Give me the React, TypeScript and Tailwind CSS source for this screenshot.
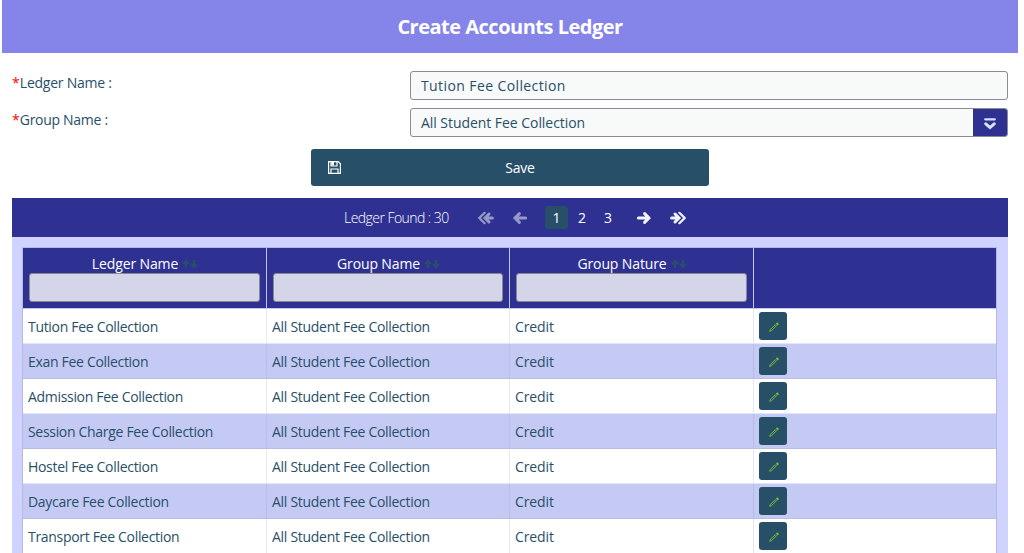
import React from "react";

const ledgers = [
  "Tution Fee Collection",
  "Exan Fee Collection",
  "Admission Fee Collection",
  "Session Charge Fee Collection",
  "Hostel Fee Collection",
  "Daycare Fee Collection",
  "Transport Fee Collection",
];

function ArrowIcon({ double = false, back = false }: { double?: boolean; back?: boolean }) {
  return (
    <svg
      width="16"
      height="14"
      viewBox="0 0 16 14"
      fill="none"
      stroke="currentColor"
      className={back ? "-scale-x-100" : ""}
    >
      {double ? (
        <>
          <path d="M1.6 7H8.6M5 3 9 7l-4 4" strokeWidth="3" strokeLinecap="round" />
          <path d="m9.4 1.8 5.2 5.2-5.2 5.2" strokeWidth="2.2" strokeLinecap="round" />
        </>
      ) : (
        <path d="M2.4 7H13M8.6 2.6 13 7l-4.4 4.4" strokeWidth="3" strokeLinecap="round" />
      )}
    </svg>
  );
}

function SortIcon() {
  return (
    <svg width="16" height="10" viewBox="0 0 16 10" fill="none" stroke="#284f68" strokeWidth="2.2">
      <path d="M4 9V2.2M1 5l3-3 3 3M12 1v6.8M9 5l3 3 3-3" />
    </svg>
  );
}

function PencilIcon() {
  return (
    <svg width="12" height="12" viewBox="0 0 12 12" fill="none" stroke="#78c52d">
      <path d="m1.7 10.3.4-1.6 5.2-5 1.1 1.1-5.1 5.1-1.6.4Z" strokeWidth="0.9" />
      <path d="m8.7 2.7.6-.6.9.9-.6.6Z" fill="#78c52d" strokeWidth="1.1" />
    </svg>
  );
}

function SaveIcon() {
  return (
    <svg width="13" height="13" viewBox="0 0 13 13" fill="none" stroke="white" strokeWidth="1.2">
      <path d="M1 .6h9.2l2.2 2.2v9.6H.6V.6H1ZM3 .6v4.4h6V.6M3 12.4V8h7v4.4" />
      <path d="M3.5 1H6v3.5H3.5z" fill="white" stroke="none" />
    </svg>
  );
}

function HeaderCell({ title }: { title: string }) {
  return (
    <div className="flex flex-col items-center border-r border-[#c3c6e8] px-[6px] pt-[6px]">
      <div className="flex h-[19px] items-center gap-1 pl-px font-medium tracking-[-0.12px] text-white">
        {title}
        <SortIcon />
      </div>
      <input
        aria-label={title}
        className="h-[29px] w-full rounded-[3px] border border-[#888891] bg-[#d5d5e9] px-2 outline-none"
      />
    </div>
  );
}

export default function App() {
  return (
    <div className="h-[553px] overflow-hidden bg-white font-['Open_Sans',sans-serif] text-[14px] leading-5 text-[#284f68]">
      <header className="ml-[2px] mr-[6px] flex h-[53px] items-center justify-center bg-[#8585e9] text-[20px] font-bold tracking-[-0.5px] text-white">
        <h1>Create Accounts Ledger</h1>
      </header>

      <main className="ml-3 mr-4 pt-[18px]">
        <form className="flex flex-col" onSubmit={(e) => e.preventDefault()}>
          <div className="flex h-[29px] justify-between">
            <label className="pt-[2px] tracking-[-0.25px]">
              <span className="mr-[0.4px] text-[#f00]">*</span>Ledger Name :
            </label>
            <div className="flex w-[598px] items-center rounded-[3px] border border-[#8b8c90] bg-[#f8f9f9] px-[10px] font-medium tracking-[0.4px]">
              Tution Fee Collection
            </div>
          </div>
          <div className="mt-2 flex h-[29px] justify-between">
            <label className="pt-[2px] tracking-[-0.3px]">
              <span className="mr-[0.4px] text-[#f00]">*</span>Group Name :
            </label>
            <div className="flex w-[598px] items-center justify-between overflow-hidden rounded-[3px] border border-[#8b8c90] bg-[#f8f9f9] pl-[10px] font-medium">
              <span className="tracking-[-0.05px]">All Student Fee Collection</span>
              <span className="flex h-full w-[34px] items-center justify-center bg-[#2e3192] pt-[2px]">
                <svg width="12" height="12" viewBox="0 0 12 12" fill="none" stroke="#d4e5ff" strokeLinecap="round">
                  <path d="M1.2 1.3h9.6" strokeWidth="2.2" />
                  <path d="m1.8 5.8 4.2 3.8 4.2-3.8" strokeWidth="3" />
                </svg>
              </span>
            </div>
          </div>
          <button className="mt-3 ml-[299px] flex h-[37px] w-[398px] items-center rounded-[3px] bg-[#284f68] pl-[17px] text-white">
            <SaveIcon />
            <span className="flex-1 pr-[10px] text-center tracking-[-0.25px]">Save</span>
          </button>
        </form>

        <section className="mt-3 bg-[#d0d2ff]">
          <nav className="flex h-[39px] items-center bg-[#2e3192] pl-[332px] text-white">
            <span className="w-[134px] font-light tracking-[-0.55px]">Ledger Found : 30</span>
            <span className="flex w-[34px] text-[#9698c9]"><ArrowIcon double back /></span>
            <span className="flex w-[33px] text-[#9698c9]"><ArrowIcon back /></span>
            <span className="flex h-[23px] w-[23px] items-center justify-center rounded-[3px] bg-[#284f68]">1</span>
            <span className="ml-px w-[26px] text-center">2</span>
            <span className="w-[26px] text-center">3</span>
            <span className="ml-[15px] flex w-[34px] text-[#f2f5ff]"><ArrowIcon /></span>
            <span className="flex text-[#f2f5ff]"><ArrowIcon double /></span>
          </nav>

          <div className="pl-[10px] pr-[11px] pt-[10px]">
            <div className="border-x border-t border-[#b5b8df]">
              <div className="grid h-[61px] grid-cols-[244px_243px_244px_1fr] border-b border-[#c3c6e8] bg-[#2e3192]">
                <HeaderCell title="Ledger Name" />
                <HeaderCell title="Group Name" />
                <HeaderCell title="Group Nature" />
              </div>
              {ledgers.map((name, i) => {
                const cell = `flex items-center border-r pt-[2px] pl-[5px] ${
                  i % 2 ? "border-[#b9bde3]" : "border-[#e4e8f2]"
                }`;
                return (
                  <div
                    key={name}
                    className={`grid h-[35px] grid-cols-[244px_243px_244px_1fr] border-b ${
                      i % 2 ? "border-[#b9bde3] bg-[#c5caf5]" : "border-[#e2e4f7] bg-white"
                    }`}
                  >
                    <span className={`${cell} tracking-[-0.31px]`}>{name}</span>
                    <span className={`${cell} tracking-[-0.29px]`}>All Student Fee Collection</span>
                    <span className={`${cell} tracking-[-0.1px]`}>Credit</span>
                    <span className="flex items-center pl-[5px]">
                      <button aria-label="Edit" className="flex h-7 w-7 items-center justify-center rounded-[3px] bg-[#284f68] pt-px pl-px">
                        <PencilIcon />
                      </button>
                    </span>
                  </div>
                );
              })}
            </div>
          </div>
        </section>
      </main>
    </div>
  );
}
